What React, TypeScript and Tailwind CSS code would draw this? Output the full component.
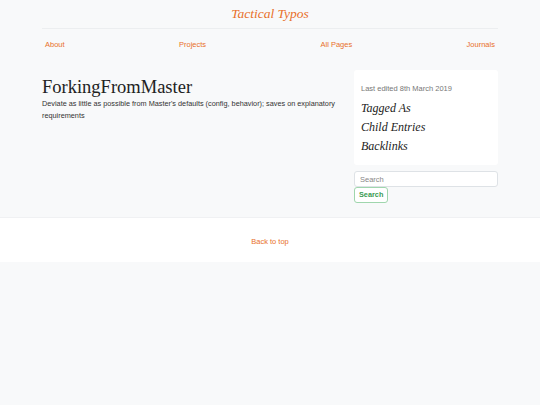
const serif = { fontFamily: '"Liberation Serif", "DejaVu Serif", serif' };

const navLinks = ["About", "Projects", "All Pages", "Journals"];

export default function App() {
  return (
    <div className="min-h-[405px] bg-[#f8f9fa] font-['Liberation_Sans',Arial,sans-serif] text-[7.5px] text-[#212529]">
      <div className="mx-auto w-[456px]">
        <header className="pt-[5px]">
          <h1
            className="text-center text-[13.5px] italic leading-[18px] text-[#e8702a]"
            style={serif}
          >
            Tactical Typos
          </h1>
          <div className="mt-[5px] border-t border-[#eceef0]" />
          <nav className="flex justify-between px-[3px] pt-[10px]">
            {navLinks.map((l) => (
              <a key={l} href="#" className="leading-[12px] text-[#e8702a]">
                {l}
              </a>
            ))}
          </nav>
        </header>

        <div className="mt-[19px] flex gap-[14px]">
          <main className="flex-1 pt-[7px]">
            <h2 className="text-[18.5px] leading-[21px] text-[#222]" style={serif}>
              ForkingFromMaster
            </h2>
            <p className="text-[7.3px] leading-[12px] text-[#333]">
              Deviate as little as possible from Master's defaults (config,
              behavior); saves on explanatory requirements
            </p>
          </main>

          <aside className="w-[144px]">
            <div className="rounded-[3px] bg-white px-[7px] pt-[13px] pb-[12px]">
              <p className="leading-[12px] text-[#777]">Last edited 8th March 2019</p>
              <div className="mt-[6px] flex flex-col gap-[5px] text-[12px] italic leading-[14px] text-[#222]" style={serif}>
                <span>Tagged As</span>
                <span>Child Entries</span>
                <span>Backlinks</span>
              </div>
            </div>
            <input
              placeholder="Search"
              className="mt-[6px] block h-[16px] w-full rounded-[3px] border border-[#dee2e6] bg-white px-[5px] text-[7.5px] placeholder:text-[#888] outline-none"
            />
            <button className="block h-[16px] rounded-[3px] border border-[#9fd6ad] bg-white px-[4px] text-[7.3px] font-bold text-[#3a9b52]">
              Search
            </button>
          </aside>
        </div>
      </div>

      <footer className="mt-[14px] flex h-[45px] items-center justify-center border-t border-[#f0f1f3] bg-white">
        <a href="#" className="mt-[3px] text-[#e8702a]">
          Back to top
        </a>
      </footer>
    </div>
  );
}
